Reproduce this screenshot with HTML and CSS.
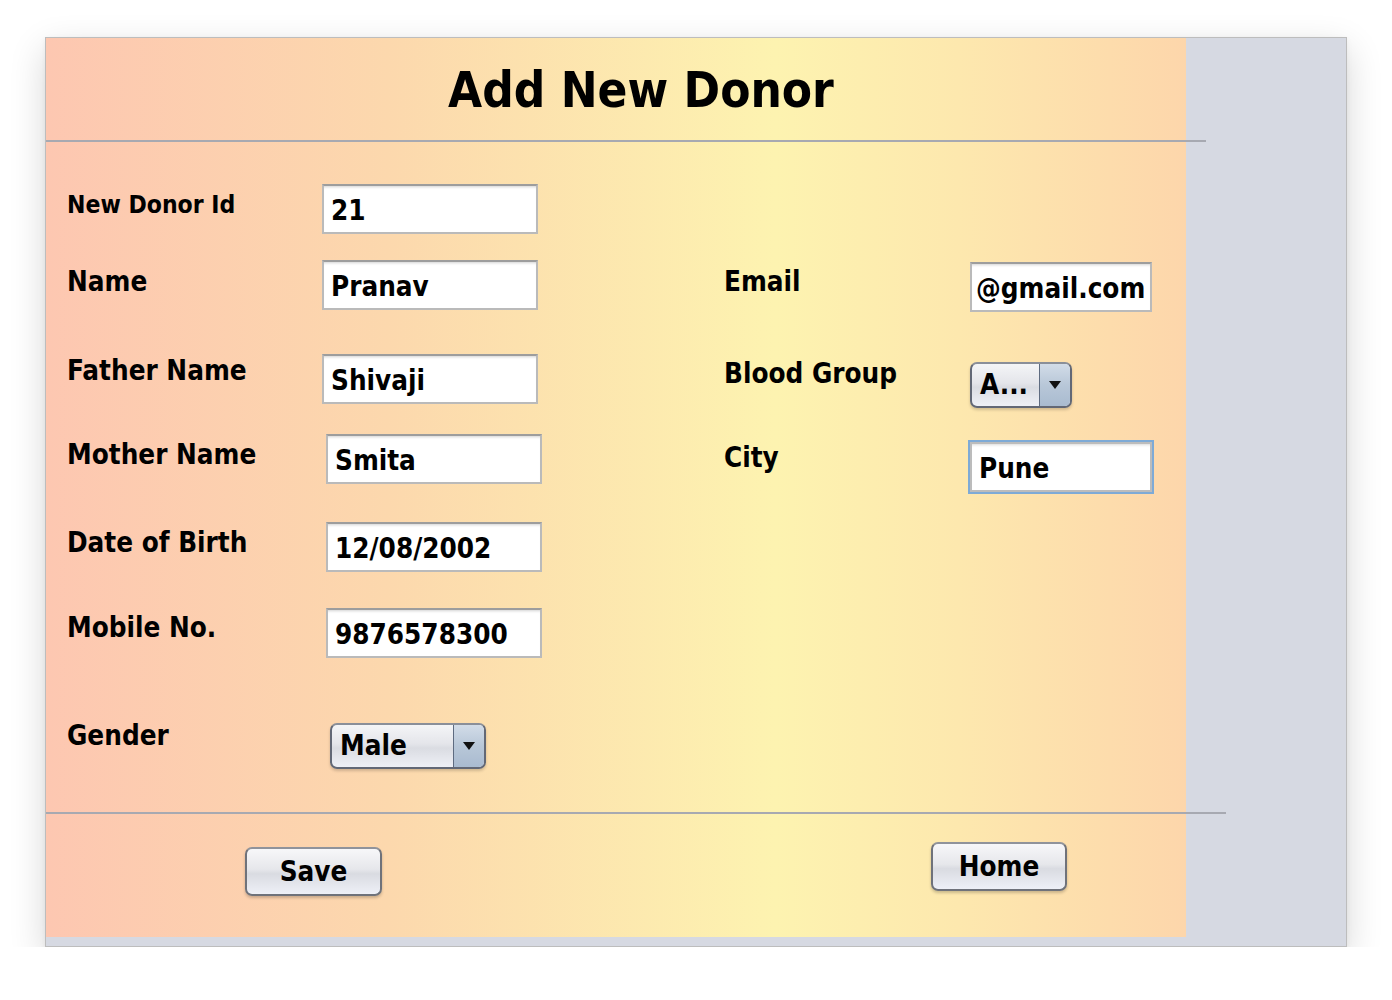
FILE: index.html
```html
<!DOCTYPE html>
<html lang="en">
<head>
<meta charset="utf-8">
<title>Add New Donor</title>
<link rel="stylesheet" href="styles.css">
</head>
<body>
<div class="window">
  <div class="panel">
    <header class="header">
      <h1 class="title">Add New Donor</h1>
    </header>
    <div class="rule rule-top"></div>
    <section class="form">
      <div class="col col-left">
        <div class="row r1"><span class="lbl lbl-small l1">New Donor Id</span><input class="field" type="text" value="21" readonly></div>
        <div class="row r2"><span class="lbl l2">Name</span><input class="field" type="text" value="Pranav" readonly></div>
        <div class="row r3"><span class="lbl l3">Father Name</span><input class="field" type="text" value="Shivaji" readonly></div>
        <div class="row r4"><span class="lbl l4">Mother Name</span><input class="field shift4" type="text" value="Smita" readonly></div>
        <div class="row r5"><span class="lbl l5">Date of Birth</span><input class="field shift4" type="text" value="12/08/2002" readonly></div>
        <div class="row r6"><span class="lbl l6">Mobile No.</span><input class="field shift4" type="text" value="9876578300" readonly></div>
        <div class="row r7"><span class="lbl">Gender</span>
          <div class="combo combo-gender">
            <span class="combo-text">Male</span>
            <span class="combo-arrow"><svg width="12" height="8" viewBox="0 0 12 8"><path d="M0 0h12L6 8z" fill="#111"/></svg></span>
          </div>
        </div>
      </div>
      <div class="col col-right">
        <div class="row re1"><span class="lbl lbl-r le1">Email</span><input class="field field-r" type="text" value="@gmail.com" readonly></div>
        <div class="row re2"><span class="lbl lbl-r">Blood Group</span>
          <div class="combo combo-blood">
            <span class="combo-text">A...</span>
            <span class="combo-arrow"><svg width="12" height="8" viewBox="0 0 12 8"><path d="M0 0h12L6 8z" fill="#111"/></svg></span>
          </div>
        </div>
        <div class="row re3"><span class="lbl lbl-r le3">City</span><input class="field field-r focused" type="text" value="Pune" readonly></div>
      </div>
    </section>
    <div class="rule rule-bottom"></div>
    <footer class="footer">
      <button class="btn btn-save" type="button">Save</button>
      <button class="btn btn-home" type="button">Home</button>
    </footer>
  </div>
</div>
</body>
</html>
```

FILE: styles.css
```css
* { box-sizing: border-box; }

html, body {
  margin: 0;
  padding: 0;
  background: #ffffff;
}

body {
  font-family: "DejaVu Sans Condensed", "DejaVu Sans", sans-serif;
  font-stretch: condensed;
  font-weight: bold;
  color: #000;
}

.window {
  margin: 37px 0 0 45px;
  width: 1302px;
  height: 910px;
  background: #d6d9e2;
  border: 1px solid #bdbdbd;
  box-shadow: 0 12px 34px rgba(0, 0, 0, 0.16), 0 2px 6px rgba(0, 0, 0, 0.06);
}

.panel {
  width: 1140px;
  height: 899px;
  background: linear-gradient(to right, #fdc7b1 0%, #fcd8ad 30%, #fdf3b0 64%, #fde8ae 80%, #fdd6ab 100%);
  display: flex;
  flex-direction: column;
}

.header {
  height: 102px;
  padding: 28px 0 0 50px;
  text-align: center;
}

.title {
  margin: 0;
  font-size: 49px;
  line-height: 49px;
  font-weight: bold;
}

.rule {
  height: 2px;
  background: #a7a9b1;
  flex: none;
}
.rule-top { width: 1160px; }
.rule-bottom { width: 1180px; }

.form {
  height: 670px;
  display: flex;
}

.col { display: flex; flex-direction: column; }
.col-left { width: 678px; padding-left: 21px; }
.col-right { flex: 1; }

.row {
  display: flex;
  align-items: flex-start;
}

.r1 { margin-top: 42px; }
.r2 { margin-top: 26px; }
.r3 { margin-top: 44px; }
.r4 { margin-top: 30px; }
.r5 { margin-top: 38px; }
.r6 { margin-top: 36px; }
.r7 { margin-top: 64px; }

.lbl {
  width: 255px;
  font-size: 27.6px;
  line-height: 27px;
  white-space: nowrap;
  flex: none;
}
.lbl-small { font-size: 24.5px; line-height: 24px; }
.l1 { margin-top: 9px; }
.l2 { margin-top: 8px; }
.l3 { margin-top: 3px; }
.l4 { margin-top: 7px; }
.l5 { margin-top: 7px; }
.l6 { margin-top: 6px; }

.field {
  width: 216px;
  height: 50px;
  margin: 0;
  padding: 3px 6px 0 7px;
  background: #fff;
  border: 2px solid #bababa;
  border-top-color: #9d9d9d;
  border-radius: 0;
  box-shadow: inset 0 3px 3px -2px rgba(0, 0, 0, 0.18);
  font-family: inherit;
  font-stretch: condensed;
  font-weight: bold;
  font-size: 27.6px;
  color: #000;
  outline: none;
}
.shift4 { margin-left: 4px; }

.combo {
  height: 46px;
  margin: 1px 0 0 8px;
  display: flex;
  border: 2px solid #626876;
  border-top-color: #8a8f99;
  border-radius: 7px;
  overflow: hidden;
  box-shadow: 0 2px 3px rgba(0, 0, 0, 0.18);
  background: linear-gradient(to bottom, #f4f5f7 0%, #e4e5ea 45%, #dadce2 55%, #eef0f6 100%);
}
.combo-gender { width: 156px; }
.combo-blood { width: 102px; margin: 2px 0 0 0; }
.combo-text {
  flex: 1;
  font-size: 27.6px;
  line-height: 42px;
  padding-left: 8px;
  white-space: nowrap;
  overflow: hidden;
}
.combo-arrow {
  width: 31px;
  flex: none;
  display: flex;
  align-items: center;
  justify-content: center;
  border-left: 1px solid #5e6b80;
  background: linear-gradient(to bottom, #d2dce8 0%, #b8c7d8 50%, #a9bbd0 100%);
}

.re1 { margin-top: 120px; }
.re2 { margin-top: 48px; }
.re3 { margin-top: 32px; }
.lbl-r { width: 246px; }
.le1 { margin-top: 6px; }
.le3 { margin-top: 4px; }
.field-r { width: 182px; padding-left: 4px; }
.focused {
  width: 186px;
  height: 54px;
  margin-left: -2px;
  border: 2px solid #7eaad6;
  box-shadow: inset 0 0 0 2px #bcbcbc, inset 0 5px 3px -2px rgba(0, 0, 0, 0.15);
  padding-left: 9px;
}

.footer {
  height: 123px;
  display: flex;
  align-items: flex-start;
}

.btn {
  width: 137px;
  height: 49px;
  padding: 0;
  border: 2px solid #6f727a;
  border-top-color: #90939b;
  border-radius: 7px;
  background: linear-gradient(to bottom, #f7f7f9 0%, #e6e7eb 45%, #d9dbe1 55%, #eef0f7 100%);
  box-shadow: 0 2px 3px rgba(0, 0, 0, 0.2);
  font-family: inherit;
  font-stretch: condensed;
  font-weight: bold;
  font-size: 27.6px;
  color: #000;
}
.btn-save { margin: 33px 0 0 199px; }
.btn-home { margin: 28px 0 0 549px; width: 136px; }
```
